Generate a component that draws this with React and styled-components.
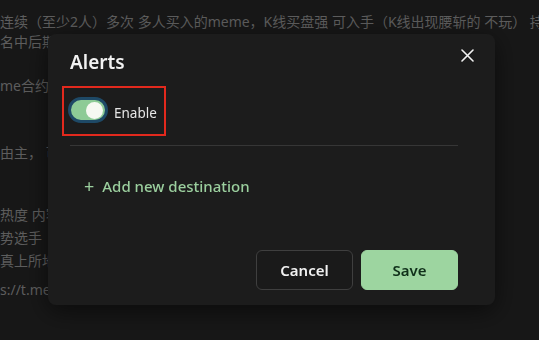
import React from 'react';
import styled, { createGlobalStyle } from 'styled-components';

const GlobalStyle = createGlobalStyle`
  html, body {
    margin: 0;
    padding: 0;
    background: #1b1b1b;
    overflow: hidden;
  }
  body {
    font-family: 'Noto Sans', 'Noto Sans CJK SC', sans-serif;
  }
`;

const Page = styled.div`
  width: 539px;
  height: 340px;
  padding-top: 11px;
  box-sizing: border-box;
  color: #6a6a6a;
  font-size: 14px;
  white-space: nowrap;
  overflow: hidden;
`;

const Line = styled.p`
  margin: 0;
  height: ${p => p.h || 22}px;
  line-height: 22px;
  display: flex;
  justify-content: space-between;
`;

const Backdrop = styled.div`
  position: fixed;
  inset: 0;
  background: rgba(0, 0, 0, 0.12);
`;

const Modal = styled.div`
  position: fixed;
  left: 48px;
  top: 34px;
  width: 447px;
  height: 271px;
  box-sizing: border-box;
  padding: 13px 37px 15px 22px;
  background: #1c1c1c;
  border-radius: 8px;
  box-shadow: 0 6px 24px rgba(0, 0, 0, 0.55);
  display: flex;
  flex-direction: column;
  color: #ececec;
`;

const Header = styled.div`
  display: flex;
  align-items: center;
  height: 29px;
`;

const Title = styled.h2`
  margin: 0;
  font-size: 19px;
  font-weight: 600;
  color: #f2f2f2;
`;

const Close = styled.button`
  position: absolute;
  right: 20px;
  top: 13px;
  width: 16px;
  height: 16px;
  padding: 0;
  border: 0;
  background: none;
  display: flex;
  align-items: center;
  justify-content: center;
`;

const Highlight = styled.div`
  margin: 10px 0 0 -8px;
  width: 104px;
  height: 50px;
  box-sizing: border-box;
  border: 2px solid #e2291d;
  display: flex;
  align-items: center;
  gap: 6px;
  padding: 1px 0 0 4px;
`;

const Track = styled.span`
  width: 40px;
  height: 26px;
  box-sizing: border-box;
  border-radius: 13px;
  border: 3px solid #1e4966;
  background: #8dcb96;
  display: flex;
  align-items: center;
  justify-content: flex-end;
  padding-right: 2px;
  margin-top: -3px;
`;

const Knob = styled.span`
  width: 17px;
  height: 17px;
  border-radius: 50%;
  background: #f6f9f2;
`;

const Label = styled.span`
  font-size: 13.5px;
  color: #e6e6e6;
  margin-top: 2px;
`;

const Divider = styled.hr`
  margin: 9px 0 0;
  border: 0;
  border-top: 1px solid #363636;
`;

const AddButton = styled.button`
  margin: 30px 0 0 14px;
  padding: 0;
  border: 0;
  background: none;
  font-family: inherit;
  font-size: 15px;
  font-weight: 500;
  color: #9bcf9e;
  display: flex;
  align-items: center;
  gap: 8px;
  align-self: flex-start;
`;

const Plus = styled.span`
  font-size: 18px;
  font-weight: 400;
  line-height: 1;
`;

const Footer = styled.div`
  margin-top: auto;
  display: flex;
  justify-content: flex-end;
  gap: 8px;
`;

const Button = styled.button`
  width: 97px;
  height: 40px;
  border-radius: 6px;
  font-family: inherit;
  font-size: 15px;
  font-weight: 600;
  border: 1px solid ${p => (p.primary ? '#9dd5a0' : '#3f3f3f')};
  background: ${p => (p.primary ? '#9dd5a0' : '#1a1a1a')};
  color: ${p => (p.primary ? '#10301a' : '#f2f2f2')};
`;

export default function App() {
  return (
    <>
      <GlobalStyle />
      <Page>
        <Line h={20}>连续（至少2人）多次 多人买入的meme，K线买盘强 可入手（K线出现腰斩的 不玩） 持</Line>
        <Line h={44}>名中后期</Line>
        <Line h={67}>me合约地址</Line>
        <Line h={62}>
          <span>由主， 可以</span>
          <span style={{ paddingRight: 46 }}>元</span>
        </Line>
        <Line h={23}>热度 内容</Line>
        <Line h={23}>势选手</Line>
        <Line h={29}>真上所地址</Line>
        <Line>s://t.me</Line>
      </Page>
      <Backdrop />
      <Modal>
        <Header>
          <Title>Alerts</Title>
          <Close aria-label="Close">
            <svg width="13" height="13" viewBox="0 0 13 13">
              <path d="M1 1L12 12M12 1L1 12" stroke="#f2f2f2" strokeWidth="1.6" strokeLinecap="round" />
            </svg>
          </Close>
        </Header>
        <Highlight>
          <Track>
            <Knob />
          </Track>
          <Label>Enable</Label>
        </Highlight>
        <Divider />
        <AddButton>
          <Plus>+</Plus>
          Add new destination
        </AddButton>
        <Footer>
          <Button>Cancel</Button>
          <Button primary>Save</Button>
        </Footer>
      </Modal>
    </>
  );
}
